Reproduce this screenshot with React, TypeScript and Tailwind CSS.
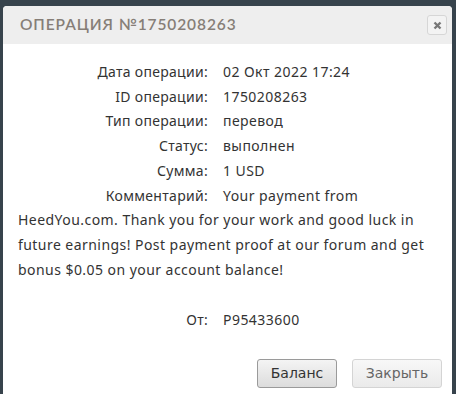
const rows: [string, string][] = [
  ["Дата операции:", "02 Окт 2022 17:24"],
  ["ID операции:", "1750208263"],
  ["Тип операции:", "перевод"],
  ["Статус:", "выполнен"],
  ["Сумма:", "1 USD"],
];

function Row({ label, children }: { label: string; children: React.ReactNode }) {
  return (
    <div>
      <span className="inline-block w-[190px] text-right mr-[15px] tracking-[0.3px]">{label}</span>
      {children}
    </div>
  );
}

export default function App() {
  return (
    <div className="w-[456px] h-[394px] bg-[#37434c] pl-[3px] pr-[4px] pt-[6px] overflow-hidden">
      <div className="bg-white rounded-[4px] h-[392px] flex flex-col overflow-hidden">
        <div className="h-[38px] bg-[#eeeeee] flex items-center justify-between pl-[17px] pr-[5px]">
          <h1
            className="text-[15.5px] font-semibold tracking-[0.9px] text-[#867e77]"
            style={{ fontFamily: "Lato, 'Noto Sans', sans-serif" }}
          >
            ОПЕРАЦИЯ №1750208263
          </h1>
          <button className="w-[20px] h-[20px] rounded-[3px] border border-[#d6d6d6] bg-[#f3f3f3] flex items-center justify-center">
            <svg width="9" height="9" viewBox="0 0 9 9">
              <path d="M1.5 1.5 L7.5 7.5 M7.5 1.5 L1.5 7.5" stroke="#777" strokeWidth="2.4" />
            </svg>
          </button>
        </div>
        <div
          className="px-[15px] pt-[16px] text-[14px] leading-[24.7px] text-[#333] tracking-[0.45px]"
          style={{ fontFamily: "'Noto Sans', sans-serif" }}
        >
          {rows.map(([l, v]) => (
            <Row key={l} label={l}>
              {v}
            </Row>
          ))}
          <Row label="Комментарий:">
            Your payment from HeedYou.com. Thank you for your work and good luck in future earnings! Post payment proof at our forum and get bonus $0.05 on your account balance!
          </Row>
          <div className="h-[26px]" />
          <Row label="От:">P95433600</Row>
        </div>
        <div
          className="flex justify-end gap-[15px] pr-[10px] mt-auto mb-[10px]"
          style={{ fontFamily: "'DejaVu Sans', sans-serif" }}
        >
          <button className="w-[80px] h-[29px] rounded-[3px] border border-[#9a9a9a] bg-gradient-to-b from-[#f4f4f4] to-[#dcdcdc] text-[14px] text-[#333]">
            Баланс
          </button>
          <button className="w-[90px] h-[29px] rounded-[3px] border border-[#d4d4d4] bg-gradient-to-b from-[#f8f8f8] to-[#eaeaea] text-[14px] text-[#666]">
            Закрыть
          </button>
        </div>
      </div>
    </div>
  );
}
